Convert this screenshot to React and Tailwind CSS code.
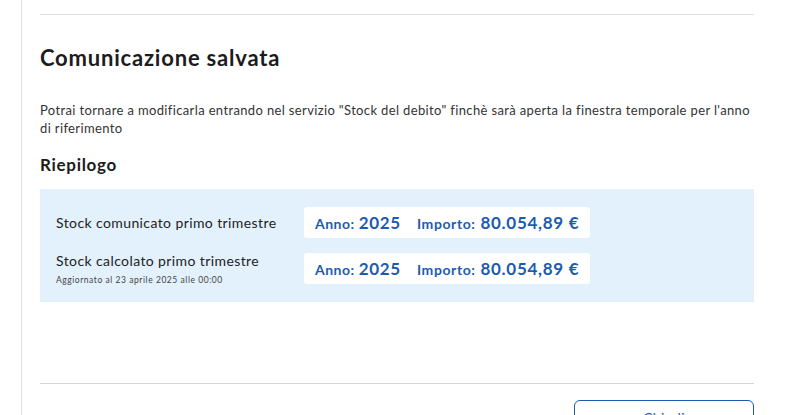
export default function App() {
  const rows = [
    { label: "Stock comunicato primo trimestre", note: null },
    { label: "Stock calcolato primo trimestre", note: "Aggiornato al 23 aprile 2025 alle 00:00" },
  ];

  return (
    <div className="h-[415px] w-[812px] overflow-hidden bg-white font-['Lato','Noto_Sans',sans-serif] text-[#1c1c1c]">
      <div className="ml-[21px] h-full border-l border-[#e2e2e2] pl-[18px] pr-[58px]">
        <div className="pt-[14px]">
          <div className="h-px bg-[#e0e0e0]" />
        </div>

        <h1 className="mt-[29px] text-[22px] font-bold leading-[28px] tracking-[0.8px]">
          Comunicazione salvata
        </h1>

        <p className="mt-[29px] text-[13px] leading-[18px] text-[#333] tracking-[0.36px]">
          Potrai tornare a modificarla entrando nel servizio "Stock del debito" finchè sarà aperta la finestra temporale per l'anno di riferimento
        </p>

        <h2 className="mt-[17px] text-[17px] font-bold leading-[22px] tracking-[0.7px]">Riepilogo</h2>

        <div className="mt-[13px] flex flex-col gap-[15px] bg-[#e3f1fd] px-[16px] py-[18px]">
          {rows.map((r) => (
            <div key={r.label} className={`flex h-[31px] ${r.note ? "items-start" : "items-center"}`}>
              <div className="w-[248px]">
                <div className="text-[14px] leading-[16px] text-[#222] tracking-[0.4px]">{r.label}</div>
                {r.note && (
                  <div className="mt-[6px] text-[8.5px] leading-[10px] text-[#444] tracking-[0.55px]">{r.note}</div>
                )}
              </div>
              <div className="flex h-[31px] items-center gap-[16px] rounded-[3px] bg-white px-[11px] text-[#1d5bb0]">
                <div className="flex items-baseline gap-[4px]">
                  <span className="text-[14px] font-bold tracking-[0.5px]">Anno:</span>
                  <span className="text-[17px] font-bold tracking-[0.7px]">2025</span>
                </div>
                <div className="flex items-baseline gap-[5px]">
                  <span className="text-[14px] font-bold tracking-[0.6px]">Importo:</span>
                  <span className="text-[17px] font-bold tracking-[0.7px]">80.054,89 €</span>
                </div>
              </div>
            </div>
          ))}
        </div>

        <div className="mt-[81px] h-px bg-[#d8d8d8]" />

        <div className="mt-[16px] flex justify-end">
          <button className="flex h-[36px] w-[180px] items-start justify-center rounded-[6px] border border-[#1d5bb0] pt-[6px] text-[14px] tracking-[0.4px] text-[#1d5bb0]">
            Chiudi
          </button>
        </div>
      </div>
    </div>
  );
}
